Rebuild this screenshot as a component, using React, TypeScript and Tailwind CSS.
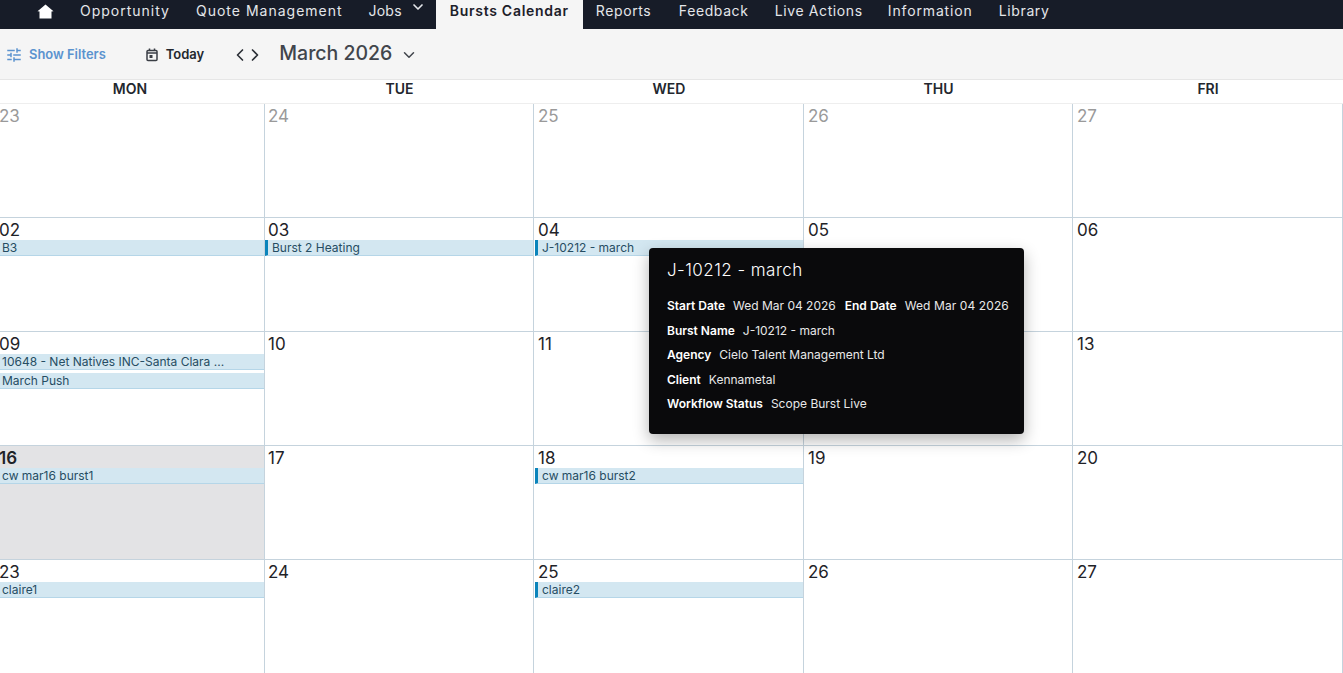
import React from 'react';
import { ChevronDown, ChevronLeft, ChevronRight } from 'lucide-react';
import { MdTune } from 'react-icons/md';

type Burst = { label: string; marker?: boolean; gap?: boolean };
type Day = { date: string; muted?: boolean; today?: boolean; bursts?: Burst[] };

const navItems = [
  { label: 'Reports', className: 'w-[83px]' },
  { label: 'Feedback', className: 'w-[96px]' },
  { label: 'Live Actions', className: 'w-[113px]' },
  { label: 'Information', className: 'w-[111px] tracking-[0.85px]' },
  { label: 'Library', className: 'w-[60px]' },
];
const weekdays = ['MON', 'TUE', 'WED', 'THU', 'FRI'];

const days: Day[] = [
  { date: '23', muted: true },
  { date: '24', muted: true },
  { date: '25', muted: true },
  { date: '26', muted: true },
  { date: '27', muted: true },
  { date: '02', bursts: [{ label: 'B3' }] },
  { date: '03', bursts: [{ label: 'Burst 2 Heating', marker: true }] },
  { date: '04', bursts: [{ label: 'J-10212 - march', marker: true }] },
  { date: '05' },
  { date: '06' },
  {
    date: '09',
    bursts: [{ label: '10648 - Net Natives INC-Santa Clara ...' }, { label: 'March Push', gap: true }],
  },
  { date: '10' },
  { date: '11' },
  { date: '12' },
  { date: '13' },
  { date: '16', today: true, bursts: [{ label: 'cw mar16 burst1' }] },
  { date: '17' },
  { date: '18', bursts: [{ label: 'cw mar16 burst2', marker: true }] },
  { date: '19' },
  { date: '20' },
  { date: '23', bursts: [{ label: 'claire1' }] },
  { date: '24' },
  { date: '25', bursts: [{ label: 'claire2', marker: true }] },
  { date: '26' },
  { date: '27' },
];

const details: [string, string][] = [
  ['Burst Name', 'J-10212 - march'],
  ['Agency', 'Cielo Talent Management Ltd'],
  ['Client', 'Kennametal'],
  ['Workflow Status', 'Scope Burst Live'],
];

const App: React.FC = () => {
  return (
    <div className="relative h-[673px] w-[1343px] overflow-hidden bg-white font-['Inter',sans-serif] text-[#1f2328]">
      <nav className="flex h-[29px] items-start bg-[#171c28] pl-[37px] text-[14px] leading-[22px] tracking-[0.6px] text-[#e4e6ea]">
        <svg className="mt-[4px] h-[15px] w-[17px] fill-white" viewBox="0 0 17 15">
          <path d="M8.5 0.5 L12 3.4 L16.5 7.2 L14.5 7.6 L14.5 14.5 L2.5 14.5 L2.5 7.6 L0.5 7.2 L5 3.4 Z" />
        </svg>
        <span className="ml-[26px] tracking-[1px]">Opportunity</span>
        <span className="ml-[26px] tracking-[1px]">Quote Management</span>
        <span className="ml-[26px] tracking-[0.2px]">Jobs</span>
        <ChevronDown className="ml-[8px] mt-[-1px] h-[16px] w-[16px]" strokeWidth={2.5} />
        <span className="ml-[10px] h-[29px] bg-[#f5f5f5] px-[14px] text-[14px] font-semibold tracking-[0.72px] text-[#1c2029]">
          Bursts Calendar
        </span>
        <div className="ml-[13px] flex">
          {navItems.map(item => (
            <span key={item.label} className={item.className}>
              {item.label}
            </span>
          ))}
        </div>
      </nav>

      <div className="flex h-[51px] items-center border-b border-[#e6e6e6] bg-[#f5f5f5] pl-[5px] pt-[1px]">
        <MdTune className="h-[18px] w-[18px] text-[#5b93cf]" />
        <span className="ml-[6px] text-[12.9px] font-semibold text-[#5b93cf]">Show Filters</span>
        <svg className="ml-[39px] h-[14px] w-[14px]" viewBox="0 0 14 14" fill="none" stroke="#3a3e45" strokeWidth="1.5">
          <rect x="2" y="2.5" width="10" height="10" rx="1" />
          <path d="M4.5 0.5v2M9.5 0.5v2M2 5h10" />
          <rect x="4.5" y="7" width="3" height="3" fill="#3a3e45" stroke="none" />
        </svg>
        <span className="ml-[7px] text-[13px] font-semibold text-[#23272e]">Today</span>
        <ChevronLeft className="ml-[26px] h-[20px] w-[20px] text-[#2b2f36]" strokeWidth={2} />
        <ChevronRight className="ml-[-5px] h-[20px] w-[20px] text-[#2b2f36]" strokeWidth={2} />
        <span className="ml-[14px] mt-[-2px] text-[19.5px] font-medium text-[#41454c]">March 2026</span>
        <ChevronDown className="ml-[8px] h-[18px] w-[18px] text-[#41454c]" strokeWidth={2} />
      </div>

      <div className="grid h-[24px] grid-cols-[265px_269px_270px_269px_270px] border-b border-[#eeeeee]">
        {weekdays.map((day, i) => (
          <div
            key={day}
            className={`text-center text-[14px] font-semibold leading-[18px] text-[#23272e] ${i === 0 ? 'pr-[5px]' : ''}`}
          >
            {day}
          </div>
        ))}
      </div>

      <div className="grid grid-cols-[265px_269px_270px_269px_270px]">
        {days.map((day, i) => (
          <div
            key={i}
            className={`h-[114px] border-r border-b border-[#c5d3dd] ${day.today ? 'bg-[#e3e3e5]' : ''} ${i % 5 > 1 ? 'pl-[1px]' : ''}`}
          >
            <div
              className={`h-[22px] text-[17px] leading-[24px] ${i % 5 === 0 ? 'ml-[-1px]' : 'pl-[3px]'} ${day.muted ? 'text-[#9a9a9a]' : ''} ${day.today ? 'font-semibold' : ''}`}
            >
              {day.date}
            </div>
            {day.bursts?.map(burst => (
              <div
                key={burst.label}
                className={`flex h-[16px] items-center border-b border-[#b5d6e8] bg-[#d3e7f1] text-[12px] leading-[15px] text-[#264d63] ${burst.gap ? 'mt-[3px]' : ''} ${burst.marker ? 'border-l-[3px] border-l-[#0b84bb] pl-[4px]' : 'pl-[2px]'}`}
              >
                {burst.label}
              </div>
            ))}
          </div>
        ))}
      </div>

      <div className="absolute left-[649px] top-[248px] h-[186px] w-[375px] rounded-[4px] bg-[#0a0a0c] px-[18px] pt-[11px] text-[12px] text-[#e8e8e8] shadow-[0_6px_16px_rgba(0,0,0,0.3)]">
        <div className="text-[17px] font-light leading-[22px] tracking-[0.45px] text-white">J-10212 - march</div>
        <div className="mt-[13px] flex h-[24.5px] items-center whitespace-nowrap">
          <b className="font-semibold text-white">Start Date</b>
          <span className="ml-[8px]">Wed Mar 04 2026</span>
          <b className="ml-[9px] font-semibold text-white">End Date</b>
          <span className="ml-[8px] tracking-[0.1px]">Wed Mar 04 2026</span>
        </div>
        {details.map(([label, value]) => (
          <div key={label} className="flex h-[24.5px] items-center whitespace-nowrap">
            <b className="font-semibold text-white">{label}</b>
            <span className="ml-[8px]">{value}</span>
          </div>
        ))}
      </div>
    </div>
  );
};

export default App;
